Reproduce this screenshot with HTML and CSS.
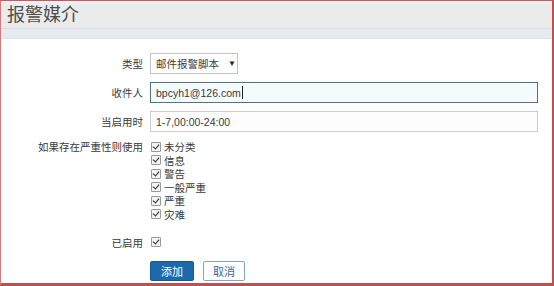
FILE: index.html
```html
<!DOCTYPE html>
<html lang="zh">
<head>
    <meta charset="UTF-8">
    <meta name="viewport" content="width=device-width, initial-scale=1.0">
    <title>报警媒介</title>
    <link rel="stylesheet" href="styles.css">
</head>
<body>
    <div class="frame">
        <div class="header">
            <h1>报警媒介</h1>
        </div>
        <div class="band"></div>
        <form class="form">
            <div class="row row-first">
                <label class="label">类型</label>
                <div class="field">
                    <span class="select">邮件报警脚本<span class="arrow">▼</span></span>
                </div>
            </div>
            <div class="row">
                <label class="label">收件人</label>
                <div class="field">
                    <span class="input focused">bpcyh1@126.com<span class="caret"></span></span>
                </div>
            </div>
            <div class="row">
                <label class="label">当启用时</label>
                <div class="field">
                    <span class="input">1-7,00:00-24:00</span>
                </div>
            </div>
            <div class="row row-list">
                <label class="label">如果存在严重性则使用</label>
                <ul class="checks">
                    <li><span class="box"></span>未分类</li>
                    <li><span class="box"></span>信息</li>
                    <li><span class="box"></span>警告</li>
                    <li><span class="box"></span>一般严重</li>
                    <li><span class="box"></span>严重</li>
                    <li><span class="box"></span>灾难</li>
                </ul>
            </div>
            <div class="row row-enabled">
                <label class="label">已启用</label>
                <div class="field">
                    <span class="box"></span>
                </div>
            </div>
            <div class="row row-buttons">
                <span class="label"></span>
                <div class="buttons">
                    <button type="button" class="btn btn-main">添加</button>
                    <button type="button" class="btn btn-alt">取消</button>
                </div>
            </div>
        </form>
    </div>
</body>
</html>
```

FILE: styles.css
```css
html, body {
    margin: 0;
    padding: 0;
}
body {
    font-family: "Liberation Sans", "Noto Sans CJK SC", sans-serif;
    font-size: 10.5px;
    color: #3a3a3a;
    background: #ffffff;
}
.frame {
    box-sizing: border-box;
    width: 554px;
    height: 286px;
    border-top: 1px solid #c9585a;
    border-left: 1px solid #d9787a;
    border-right: 2px solid #c0504d;
    border-bottom: 3px solid #c0504d;
    overflow: hidden;
}
.header {
    height: 28px;
    background: #ebebeb;
    border-top: 4px solid #eaeff3;
    box-sizing: border-box;
    border-bottom: 1px solid #dcdcdc;
}
.header h1 {
    margin: 0;
    padding-left: 6px;
    font-size: 18px;
    font-weight: normal;
    line-height: 20px;
    color: #4d4d4d;
}
.band {
    height: 9px;
    background: #e5ebf1;
    border-bottom: 1px solid #dde4ec;
}
.form {
    margin: 0;
    padding: 14px 14px 0 0;
}
.row {
    display: flex;
    align-items: center;
    height: 21px;
    margin-top: 8px;
}
.row-first {
    margin-top: 0;
}
.label {
    width: 142px;
    margin-right: 7px;
    text-align: right;
    flex-shrink: 0;
}
.field {
    flex: 1;
    display: flex;
    align-items: center;
}
.select {
    box-sizing: border-box;
    width: 88px;
    height: 21px;
    border: 1px solid #c4c4c4;
    background: #ffffff;
    padding-left: 5px;
    display: flex;
    align-items: center;
}
.arrow {
    font-size: 8px;
    margin-left: 9px;
    color: #222222;
}
.input {
    box-sizing: border-box;
    width: 100%;
    height: 21px;
    border: 1px solid #cccccc;
    background: #fdfdfd;
    padding-left: 5px;
    display: flex;
    align-items: center;
}
.input.focused {
    border-color: #4f7484;
    background: #f5fbfd;
}
.caret {
    display: inline-block;
    width: 1px;
    height: 13px;
    background: #222222;
    margin-left: 1px;
}
.row-list {
    height: auto;
    align-items: flex-start;
}
.row-list .label {
    line-height: 14px;
}
.checks {
    list-style: none;
    margin: 0;
    padding: 0;
}
.checks li {
    display: flex;
    align-items: center;
    height: 13.5px;
}
.box {
    box-sizing: border-box;
    width: 10px;
    height: 10px;
    margin-left: 1px;
    margin-right: 3px;
    border: 1px solid #999999;
    border-radius: 1px;
    background: #f3f3f3;
    position: relative;
}
.box::after {
    content: "";
    position: absolute;
    left: 2px;
    top: 0px;
    width: 3px;
    height: 5px;
    border-right: 1.5px solid #2a2a2a;
    border-bottom: 1.5px solid #2a2a2a;
    transform: rotate(40deg);
}
.row-enabled {
    margin-top: 11px;
    height: 20px;
}
.row-buttons {
    margin-top: 9px;
    height: 20px;
}
.buttons {
    display: flex;
    gap: 9px;
}
.btn {
    box-sizing: border-box;
    height: 20px;
    padding: 0;
    font-family: "Liberation Sans", "Noto Sans CJK SC", sans-serif;
    font-size: 11px;
    border-radius: 2px;
    cursor: pointer;
}
.btn-main {
    width: 44px;
    background: #1c69ab;
    border: 1px solid #165a93;
    color: #ffffff;
}
.btn-alt {
    width: 42px;
    background: #ffffff;
    border: 1px solid #7fa6c9;
    color: #2d6aa3;
}
```
